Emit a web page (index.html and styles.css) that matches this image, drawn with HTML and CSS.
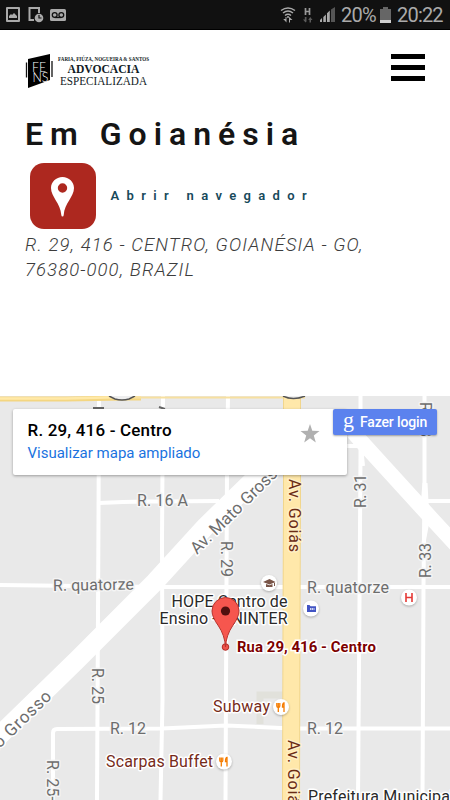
FILE: index.html
```html
<!DOCTYPE html>
<html lang="pt-BR">
<head>
<meta charset="utf-8">
<title>Advocacia Especializada</title>
<link rel="stylesheet" href="styles.css">
</head>
<body>
<div class="status">
  <svg class="status-left" width="62" height="18" viewBox="5 6 62 18" fill="#aaa">
    <path fill-rule="evenodd" d="M7 7h12q1 0 1 1v13q0 1-1 1H7q-1 0-1-1V8q0-1 1-1zm1 2v11h10V9z"/>
    <path d="M9 18v-2l2-2 1 1 2-2 3 3v2z"/>
    <path d="M39 13V8H29.5v12H34" fill="none" stroke="#aaa" stroke-width="2"/>
    <circle cx="39" cy="18" r="4.3"/><path d="M39 15v3h2.5" fill="none" stroke="#111" stroke-width="1.2"/>
    <rect x="50" y="9" width="16" height="12" rx="1.5"/>
    <path d="M54.7 17.5h6.6" fill="none" stroke="#111" stroke-width="1.3"/>
    <g fill="none" stroke="#111" stroke-width="1.3"><circle cx="54.7" cy="15" r="2.4"/><circle cx="61.3" cy="15" r="2.4"/></g>
  </svg>
  <svg class="status-right" width="56" height="18" viewBox="280 6 56 18">
    <g fill="none" stroke="#aaa" stroke-width="1.5"><path d="M281 10.500q7-5 14 0M283 13q5-4 10 0M285 15.500q3-2.500 6 0"/></g>
    <path d="M285.500 17v2h-2.300l3.300 3.500V17zM290 22.500v-2.500h2.500L289 16.800v5.700z" fill="#aaa"/><circle cx="288" cy="17" r="1" fill="#aaa"/>
    <path d="M305.500 8v7M309.500 8v7M305.500 11.500h4" stroke="#999" stroke-width="1.7"/>
    <path d="M304.800 17v2.500H303l2.500 3 1-1V17zM309.500 22.500V20h-1.300l2-3 2.300 3h-1.500v2.500z" fill="#5b5b5b"/>
    <g fill="#aaa"><path d="M320 22v-2l2-2v4zM323.300 22v-5l2.600-2.600V22zM327 22v-8.700l2.800-2.800V22z"/><path d="M331 22V9.500L335 7v15z" fill="#555"/></g>
  </svg>
  <span class="percent">20%</span>
  <svg class="battery" width="11" height="16" viewBox="0 0 11 16"><path d="M0 2h3V0h5v2h3v14H0z" fill="#666"/><path d="M0 13h11v3H0z" fill="#d0d0d0"/></svg>
  <span class="clock">20:22</span>
</div>
<header class="top">
  <svg class="logo" width="126" height="38" viewBox="25 52 126 38">
    <path d="M28 59l22-5v26l-22 8z"/><path d="M26.500 62.500v15M52 61v16" stroke="#111" stroke-width="1.3"/>
    <g class="mono"><text x="32" y="71.500" textLength="14" lengthAdjust="spacingAndGlyphs">FE</text><text x="32.500" y="82" textLength="16" lengthAdjust="spacingAndGlyphs">NS</text></g>
    <g class="brand">
      <text class="names" x="58" y="60.800" textLength="91" lengthAdjust="spacingAndGlyphs">FARIA, FIÚZA, NOGUEIRA &amp; SANTOS</text>
      <text class="adv" x="67.500" y="72.500" textLength="72" lengthAdjust="spacingAndGlyphs">ADVOCACIA</text>
      <text class="esp" x="60" y="84.500" textLength="87" lengthAdjust="spacingAndGlyphs">ESPECIALIZADA</text>
    </g>
  </svg>
  <div class="menu"><i></i><i></i><i></i></div>
</header>
<main class="content">
  <h1>Em Goianésia</h1>
  <div class="nav">
    <svg class="pin" width="66" height="66" viewBox="0 0 66 66"><rect width="66" height="66" rx="14" fill="#ad281f"/><path fill="#fff" fill-rule="evenodd" d="M32.500 14C26 14 21 19 21 25c0 9 9.500 15 10.300 27q.1 1.500 1.200 1.500t1.200-1.500C34.500 40 44 34 44 25c0-6-5-11-11.500-11zm0 6.300a4.700 4.700 0 1 1 0 9.400 4.700 4.700 0 0 1 0-9.400z"/></svg>
    <span>Abrir navegador</span>
  </div>
  <address>R. 29, 416 - CENTRO, GOIANÉSIA - GO,<br>76380-000, BRAZIL</address>
</main>
<section class="map">
  <svg class="tiles" width="450" height="404" viewBox="0 396 450 404">
    <rect y="396" width="450" height="404" fill="#e9e9e9"/>
    <g class="roads">
      <path d="M99 396L98.500 520 97 800"/>
      <path d="M163 396L162 540 162.500 700 160.500 800"/>
      <path d="M228 396L227 470 225.500 800"/>
      <path d="M360.500 396v60l-1 145-1.500 199"/>
      <path d="M424.500 396v90l-1 100-1 214"/>
      <path d="M99 503q30-2 60-1.500l60-.5"/>
      <path d="M427 501h23"/>
      <path d="M0 585l160 2h290"/>
      <path d="M53 800v-67q0-4 4-4l105-.5 64-3 66 3H450"/>
      <path d="M345 446h16l2 20"/>
    </g>
    <g fill="none" stroke="#fff">
      <path d="M-5 740L77 660 155 582 205 527 310 425" stroke-width="19"/>
      <path d="M345 423l15 17 72 79 25 27" stroke-width="15"/>
      <path d="M424.500 483l-2 24M425.500 483l2 38-4 22" stroke-width="4"/>
    </g>
    <path d="M260 724v-29h23" fill="none" stroke="#e1e1db" stroke-width="7"/>
    <path d="M0 399h66l60-1h15" fill="none" stroke="#f4d681" stroke-width="5"/>
    <path d="M0 398.500h66l60-1.500h15" fill="none" stroke="#ffe9a8" stroke-width="2.5"/>
    <path d="M135 397.500H305" stroke="#f7e0a0" stroke-width="2"/>
    <path d="M292 396v105l-.5 120-.5 179" fill="none" stroke="#f1d68d" stroke-width="18"/>
    <path d="M292 396v105l-.5 120-.5 179" fill="none" stroke="#ffe8aa" stroke-width="16"/>
    <path d="M109 396l6 3q7 2 14 0l6-3M283 396q10 5 22 0" fill="#eee" stroke="#555" stroke-width="1.5"/>
    <path d="M93 408h11M159 407l6 2" stroke="#666" stroke-width="2"/>
    <g class="labels">
      <text x="137" y="506" textLength="51">R. 16 A</text>
      <text class="large" transform="translate(197 555) rotate(-44.5)" textLength="124">Av. Mato Grosso</text>
      <text transform="translate(220.500 541) rotate(90)" textLength="36">R. 29</text>
      <text transform="translate(366 508) rotate(-90)" textLength="34">R. 31</text>
      <text transform="translate(430.500 578) rotate(-90)" textLength="35">R. 33</text>
      <text transform="translate(419.500 402) rotate(90)" textLength="35">R. 33</text>
      <text transform="translate(53 591) rotate(-1)" textLength="81">R. quatorze</text>
      <text x="307" y="593" textLength="82">R. quatorze</text>
      <text x="110" y="734" textLength="36">R. 12</text>
      <text x="307" y="734" textLength="36">R. 12</text>
      <text transform="translate(92 668) rotate(90)" textLength="36">R. 25</text>
      <text transform="translate(47 760) rotate(90)" textLength="41">R. 25-</text>
      <text class="large" transform="translate(-5 753) rotate(-44)" textLength="80">to Grosso</text>
      <text class="avenue" transform="translate(288.500 479) rotate(90)" textLength="73">Av. Goiás</text>
      <text class="avenue" transform="translate(288 740) rotate(90)" textLength="73">Av. Goiás</text>
      <text class="place" x="171.500" y="607" textLength="116">HOPE Centro de</text>
      <text class="place" x="159.500" y="624" textLength="128">Ensino - UNINTER</text>
      <text class="place" x="308" y="802" textLength="146">Prefeitura Municipal</text>
      <text class="food" x="213" y="712" textLength="57">Subway</text>
      <text class="food" x="106" y="766.500" textLength="107">Scarpas Buffet</text>
    </g>
    <g class="poi"><circle cx="269" cy="583" r="8"/><circle cx="311" cy="608.500" r="8"/><circle cx="409" cy="597.500" r="8"/><circle cx="281" cy="707" r="8"/><circle cx="224" cy="761.500" r="8"/></g>
    <path d="M263 582l6.500-3 6 3-6 2.500zM266 584v3h6.500v-3l-3 1.300zM274 582v4h1v-4z" fill="#795548"/>
    <path d="M307 605h2.500l1 1.200h5.500v5.800h-9z" fill="#4355c4"/><path d="M310 609h4.500" stroke="#fff" stroke-width="1.6" stroke-dasharray="1.300 .5"/>
    <path d="M406 593v9M412 593v9M406 597.500h6" stroke="#e53935" stroke-width="1.6"/>
    <g fill="none" stroke="#f57c00" stroke-width="1.3">
      <path d="M276.800 703v3q0 1.500 1.500 1.500t1.500-1.500v-3M278.300 703v9M284 712v-9q-1.500 0-1.500 4H284"/>
      <path d="M219.800 757.500v3q0 1.500 1.500 1.500t1.500-1.500v-3M221.300 757.500v9M227 766.500v-9q-1.500 0-1.500 4H227"/>
    </g>
    <circle cx="225.500" cy="647" r="3.300" fill="#ee534b" stroke="#b12c26"/>
    <path d="M225.500 647q-.8-12-7-21-6.500-9-6.500-15a13.500 13.500 0 0 1 27 0q0 6-6.500 15-6.200 9-7 21z" fill="#f6564e" stroke="#b8342e"/>
    <circle cx="225.500" cy="611" r="4.600" fill="#51100f"/>
    <text class="marker" x="237" y="652" textLength="139">Rua 29, 416 - Centro</text>
  </svg>
  <div class="card">
    <div><strong>R. 29, 416 - Centro</strong><a>Visualizar mapa ampliado</a></div>
    <svg width="20" height="19" viewBox="0 0 20 19"><path d="M10 0l2.300 6.800 7.200.2-5.700 4.400 2 7.100L10 14.300l-5.800 4.200 2-7.100L.5 7l7.200-.2z" fill="#b0b0b0"/></svg>
  </div>
  <div class="login">
    <b>g</b>
    <span>Fazer login</span>
  </div>
</section>
</body>
</html>
```
FILE: styles.css
```css
* { box-sizing: border-box; }
body { margin: 0; width: 450px; height: 800px; overflow: hidden; background: #fff; font-family: Roboto, sans-serif; }
svg { display: block; flex: none; }
.status { height: 30px; background: #111; border-bottom: 1px solid #000; display: flex; align-items: center; padding: 0 7px 0 5px; color: #aaa; font-size: 20px; line-height: 30px; white-space: nowrap; }
.status-left { margin-right: 213px; }
.percent { width: 34px; margin-left: 5px; letter-spacing: -.8px; }
.battery { margin-left: 5px; }
.clock { margin-left: 6px; letter-spacing: -.8px; }
.top { height: 78px; padding: 22px 25px 0; display: flex; justify-content: space-between; }
.logo { overflow: visible; }
.mono { fill: #fff; font: 300 13px Lato, sans-serif; }
.brand { font-family: "Liberation Serif", serif; fill: #111b25; }
.names { font-size: 5.5px; font-weight: bold; }
.adv { font-size: 12px; font-weight: bold; }
.esp { font-size: 12.5px; }
.menu { width: 34px; padding-top: 2px; display: flex; flex-direction: column; gap: 6px; }
.menu i { height: 5px; background: #000; }
.content { height: 288px; padding: 8px 25px 0; }
h1 { margin: 0; font-size: 32px; line-height: 36px; font-weight: 600; letter-spacing: 7px; color: #151515; white-space: nowrap; }
.nav { display: flex; align-items: center; gap: 15px; margin: 11px 0 0 4.5px; color: #174a5b; font-size: 13px; font-weight: 600; letter-spacing: 7.35px; line-height: 15px; white-space: nowrap; }
.nav span { margin-top: -2px; }
address { margin-top: 4px; font-size: 18.5px; line-height: 25px; font-weight: 300; color: #3c3c3c; letter-spacing: 1.1px; white-space: nowrap; }
.map { position: relative; height: 404px; overflow: hidden; }
.roads { fill: none; stroke: #fff; stroke-width: 4; }
.labels text { font-size: 16px; fill: #6d6d6d; stroke: #f4f4f4; stroke-width: 3px; paint-order: stroke; stroke-linejoin: round; }
.labels .large { font-size: 17px; stroke: #fff; }
.labels .avenue { fill: #6b2c14; stroke: #ffefc4; }
.labels .place { fill: #292929; stroke: #fff; }
.labels .food { fill: #762b1a; stroke: #fff; }
.poi { fill: #fff; filter: drop-shadow(0 1px 1px #0004); }
.marker { font-size: 15px; font-weight: 700; fill: #7d0000; stroke: #fff; stroke-width: 3px; paint-order: stroke; }
.card { position: absolute; left: 12.5px; top: 13px; width: 334.5px; height: 66px; padding: 11px 27px 0 15px; background: #fff; border-radius: 2px; box-shadow: 0 1px 3px #0005; display: flex; justify-content: space-between; }
.card strong { display: block; font-size: 17px; line-height: 21px; font-weight: 500; color: #000; letter-spacing: .18px; }
.card a { display: block; font-size: 15px; line-height: 25px; color: #1a73e0; }
.card svg { margin-top: 4px; }
.login { position: absolute; left: 333px; top: 13px; width: 104px; height: 26px; padding-left: 10px; display: flex; align-items: center; gap: 6px; background: #5b82ee; border-radius: 2px; box-shadow: 0 1px 2px #0005; color: #fff; font-size: 14px; letter-spacing: -.15px; font-weight: 500; white-space: nowrap; }
.login b { width: 11px; font: 22px/20px "Liberation Serif", serif; margin-top: -5px; }
```
